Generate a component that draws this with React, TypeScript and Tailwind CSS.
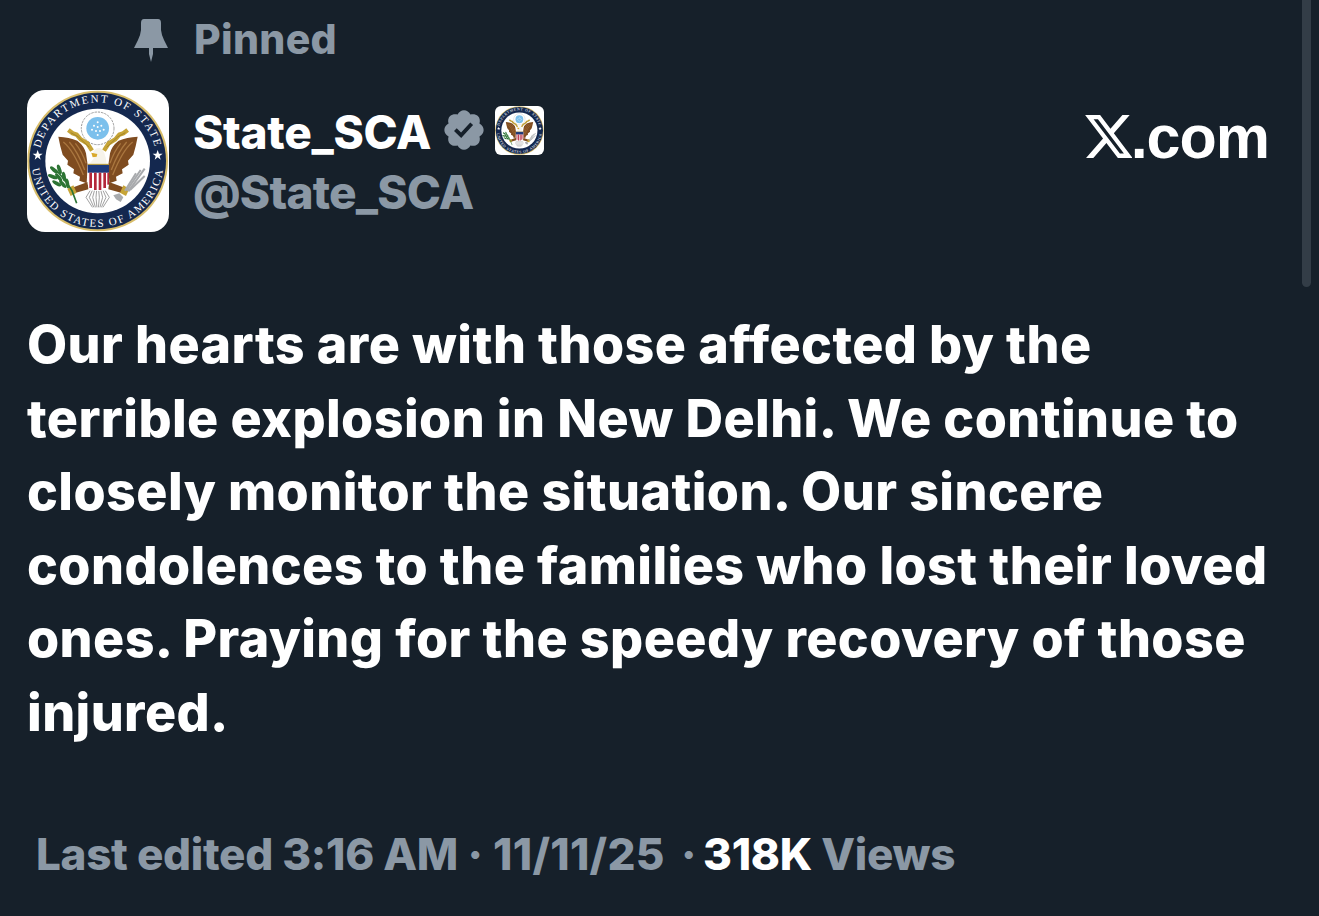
import { useId } from "react";

const bodyLines = [
  "Our hearts are with those affected by the",
  "terrible explosion in New Delhi. We continue to",
  "closely monitor the situation. Our sincere",
  "condolences to the families who lost their loved",
  "ones. Praying for the speedy recovery of those",
  "injured.",
];

const olive = [
  [12, 150, 40],
  [28, 148, 70],
  [8, 170, 20],
  [26, 172, 50],
  [42, 170, 80],
  [20, 190, 30],
  [38, 192, 50],
  [52, 190, 80],
];

const shieldStripes = [118, 132, 146, 160];
const tailLines = [108, 118, 128, 138, 148, 158, 168, 178];

function Wing() {
  return (
    <g>
      <path
        d="M25 50 Q58 52 82 62 Q103 78 108 100 L113 135 L110 190 L88 182 L90 170 L70 160 L72 148 L52 134 L54 122 L38 104 Q30 78 25 50 Z"
        fill="#7f4c20"
      />
      <path d="M40 66 Q70 90 100 165 M58 66 Q84 96 104 150 M76 70 Q96 94 108 130" stroke="#a9763f" strokeWidth="4" fill="none" />
      {/* arrow bar held over the wing */}
      <path d="M55 30 L68 40 L80 44 L92 58 L112 70 L126 92" stroke="#c6a437" strokeWidth="13" fill="none" />
      <path d="M62 38 L84 50 L118 82" stroke="#8f7422" strokeWidth="2" fill="none" />
    </g>
  );
}

// drawn in the coordinates of a 426 unit square, centred on 233,228
function Seal({ className }: { className: string }) {
  const id = useId().replace(/[^a-zA-Z0-9]/g, "");
  return (
    <svg viewBox="21 15 426 426" className={className}>
      <rect x="21" y="15" width="426" height="426" fill="#ffffff" />
      <circle cx="233" cy="228" r="211" fill="#d8bd6a" />
      <circle cx="233" cy="228" r="205" fill="#14284f" />
      <circle cx="233" cy="228" r="157" fill="#ffffff" />
      <defs>
        <path id={`${id}top`} d="M 57 228 A 176 176 0 0 1 409 228" />
        <path id={`${id}bottom`} d="M 35 228 A 198 198 0 0 0 431 228" />
      </defs>
      <text fill="#ffffff" fontFamily="'Liberation Serif', serif" fontSize="33" letterSpacing="5.5">
        <textPath href={`#${id}top`} startOffset="50%" textAnchor="middle">
          DEPARTMENT OF STATE
        </textPath>
      </text>
      <text fill="#ffffff" fontFamily="'Liberation Serif', serif" fontSize="33" letterSpacing="5">
        <textPath href={`#${id}bottom`} startOffset="50%" textAnchor="middle">
          UNITED STATES OF AMERICA
        </textPath>
      </text>
      <path d="M53 195l4 11h11l-9 7 3 11-9-7-9 7 3-11-9-7h11z" fill="#ffffff" />
      <path d="M413 195l4 11h11l-9 7 3 11-9-7-9 7 3-11-9-7h11z" fill="#ffffff" />
      <circle cx="233" cy="130" r="49" fill="none" stroke="#9a9a9a" strokeWidth="3" strokeDasharray="7 3" />
      <circle cx="233" cy="130" r="34" fill="#7cc0ec" />
      <g fill="#ffffff">
        <circle cx="233" cy="112" r="3" />
        <circle cx="222" cy="122" r="3" />
        <circle cx="244" cy="122" r="3" />
        <circle cx="233" cy="126" r="3" />
        <circle cx="216" cy="134" r="3" />
        <circle cx="228" cy="138" r="3" />
        <circle cx="240" cy="138" r="3" />
        <circle cx="251" cy="134" r="3" />
        <circle cx="233" cy="150" r="3" />
      </g>
      <g transform="translate(90 105)">
        <Wing />
        <g transform="matrix(-1 0 0 1 288 0)">
          <Wing />
        </g>
        {/* head */}
        <path d="M128 100 Q134 82 150 84 Q166 90 170 132 L116 132 Q130 122 134 108 Z" fill="#f6f3ea" />
        <path d="M142 102 L124 98 L128 112 L140 110 Z" fill="#d9a92c" />
        {/* legs */}
        <path d="M113 186 L62 205 L72 220 L115 208 Z" fill="#7f4c20" />
        <path d="M177 186 L228 205 L218 220 L175 208 Z" fill="#7f4c20" />
        <path d="M52 206 L70 196 L80 218 L62 228 Z" fill="#c6a437" />
        <path d="M238 206 L220 196 L210 218 L228 228 Z" fill="#c6a437" />
        {/* tail */}
        {tailLines.map((x) => (
          <path key={x} d={`M${x + (143 - x) * 0.35} 212 L${x} 232 L${143 + (x - 143) * 0.45} 262`} stroke="#8e8e8e" strokeWidth="2.5" fill="none" />
        ))}
        {/* shield */}
        <path d="M113 133 H177 V192 Q177 208 145 213 Q113 208 113 192 Z" fill="#ffffff" />
        <path d="M113 133 H177 V158 H113 Z" fill="#1d3a7c" />
        <path d="M113 133 H177" stroke="#c6a437" strokeWidth="3" />
        {shieldStripes.map((x) => (
          <rect key={x} x={x} y="158" width="8" height={x === 132 || x === 146 ? 52 : 46} fill="#b4263a" />
        ))}
        <rect x="172" y="158" width="5" height="36" fill="#b4263a" />
        {/* olive branch */}
        <path d="M18 150 Q50 185 66 212 L80 250" stroke="#2d7434" strokeWidth="5" fill="none" />
        {olive.map(([x, y, r]) => (
          <ellipse key={`${x}-${y}`} cx={x} cy={y} rx="15" ry="5.5" transform={`rotate(${r} ${x} ${y})`} fill="#2d7434" />
        ))}
        {/* arrows */}
        <g stroke="#a8aaad" strokeWidth="6" fill="none">
          <path d="M225 212 L258 160" />
          <path d="M230 212 L272 150" />
          <path d="M235 214 L284 146" />
          <path d="M240 210 L284 168" />
        </g>
        <path d="M190 226 L208 220 L220 232 L212 246 L198 238 Z" fill="#a8aaad" />
      </g>
    </svg>
  );
}

function PinIcon() {
  return (
    <svg viewBox="0 0 34 43" className="h-[43px] w-[34px] shrink-0 fill-[#8b98a5]">
      <path d="M10 0H24Q27 0 27 4V11Q27.5 16 30 21L34 29H19V35L17 43L15 35V29H0L4 21Q6.5 16 7 11V4Q7 0 10 0Z" />
    </svg>
  );
}

function VerifiedBadge() {
  return (
    <svg viewBox="0 0 24 24" className="mb-1 ml-[10px] h-[46px] w-[46px] shrink-0 fill-[#8b98a5]">
      <path d="M22.25 12c0-1.43-.88-2.67-2.19-3.34.46-1.39.2-2.9-.81-3.91s-2.52-1.27-3.91-.81c-.66-1.31-1.91-2.19-3.34-2.19s-2.67.88-3.33 2.19c-1.4-.46-2.91-.2-3.92.81s-1.26 2.52-.8 3.91c-1.31.67-2.2 1.91-2.2 3.34s.89 2.67 2.2 3.34c-.46 1.39-.21 2.9.8 3.91s2.52 1.26 3.91.81c.67 1.31 1.91 2.19 3.34 2.19s2.68-.88 3.34-2.19c1.39.45 2.9.2 3.91-.81s1.27-2.52.81-3.91c1.31-.67 2.19-1.91 2.19-3.34zm-11.71 4.2L6.8 12.46l1.41-1.42 2.26 2.26 4.8-5.23 1.47 1.36-6.2 6.77z" />
    </svg>
  );
}

function XLogo() {
  return (
    <svg viewBox="1.2 2.25 21.4 19.5" className="h-[45px] w-[47px] shrink-0 fill-white">
      <path d="M18.244 2.25h3.308l-7.227 8.26 8.502 11.24H16.17l-5.214-6.817L4.99 21.75H1.68l7.73-8.835L1.254 2.25H8.08l4.713 6.231zm-1.161 17.52h1.833L7.084 4.126H5.117z" />
    </svg>
  );
}

export default function App() {
  return (
    <div className="relative h-[916px] w-full overflow-hidden bg-[#16202a] font-['Inter','Liberation_Sans',sans-serif] text-white">
      {/* scrollbar */}
      <div className="absolute right-2 top-0 h-[287px] w-[9px] rounded-b-full bg-[#333d47]" />

      <div className="flex h-[82px] items-start gap-[26px] pl-[134px] pt-[19px]">
        <PinIcon />
        <span className="mt-px text-[41px] font-extrabold leading-[38px] tracking-[0.3px] text-[#8b98a5]">Pinned</span>
      </div>

      <div className="mt-2 flex items-start pl-[27px] pr-[50px]">
        <div className="h-[142px] w-[142px] shrink-0 overflow-hidden rounded-[18px]">
          <Seal className="h-full w-full" />
        </div>
        <div className="ml-6 flex flex-col pt-[12px]">
          <div className="flex h-[60px] items-center">
            <span className="text-[46px] font-extrabold leading-[60px] tracking-[-0.3px]">State_SCA</span>
            <VerifiedBadge />
            <div className="mb-1 ml-2 h-[49px] w-[49px] overflow-hidden rounded-md">
              <Seal className="h-full w-full" />
            </div>
          </div>
          <span className="text-[46px] font-extrabold leading-[60px] tracking-[-0.8px] text-[#8b98a5]">@State_SCA</span>
        </div>
        <div className="ml-auto mt-6 flex items-end font-['Liberation_Sans',sans-serif]">
          <XLogo />
          <span className="ml-[-1px] text-[61px] font-bold leading-[43px] tracking-[-1px]">.com</span>
        </div>
      </div>

      <div className="mt-[76px] pl-[27px] text-[52px] font-extrabold leading-[73.5px] tracking-[0.4px]">
        {bodyLines.map((line) => (
          <div key={line} className="whitespace-nowrap">
            {line}
          </div>
        ))}
      </div>

      <div className="mt-[75px] whitespace-pre pl-9 text-[44px] font-extrabold leading-[60px] tracking-[-0.3px] text-[#8b98a5]">
        Last edited 3:16 AM <span className="tracking-[0.25px]">· 11/11/25</span>
        <span className="tracking-[-1.5px]">{"  · "}</span>
        <span className="text-white">318K</span> Views
      </div>
    </div>
  );
}
